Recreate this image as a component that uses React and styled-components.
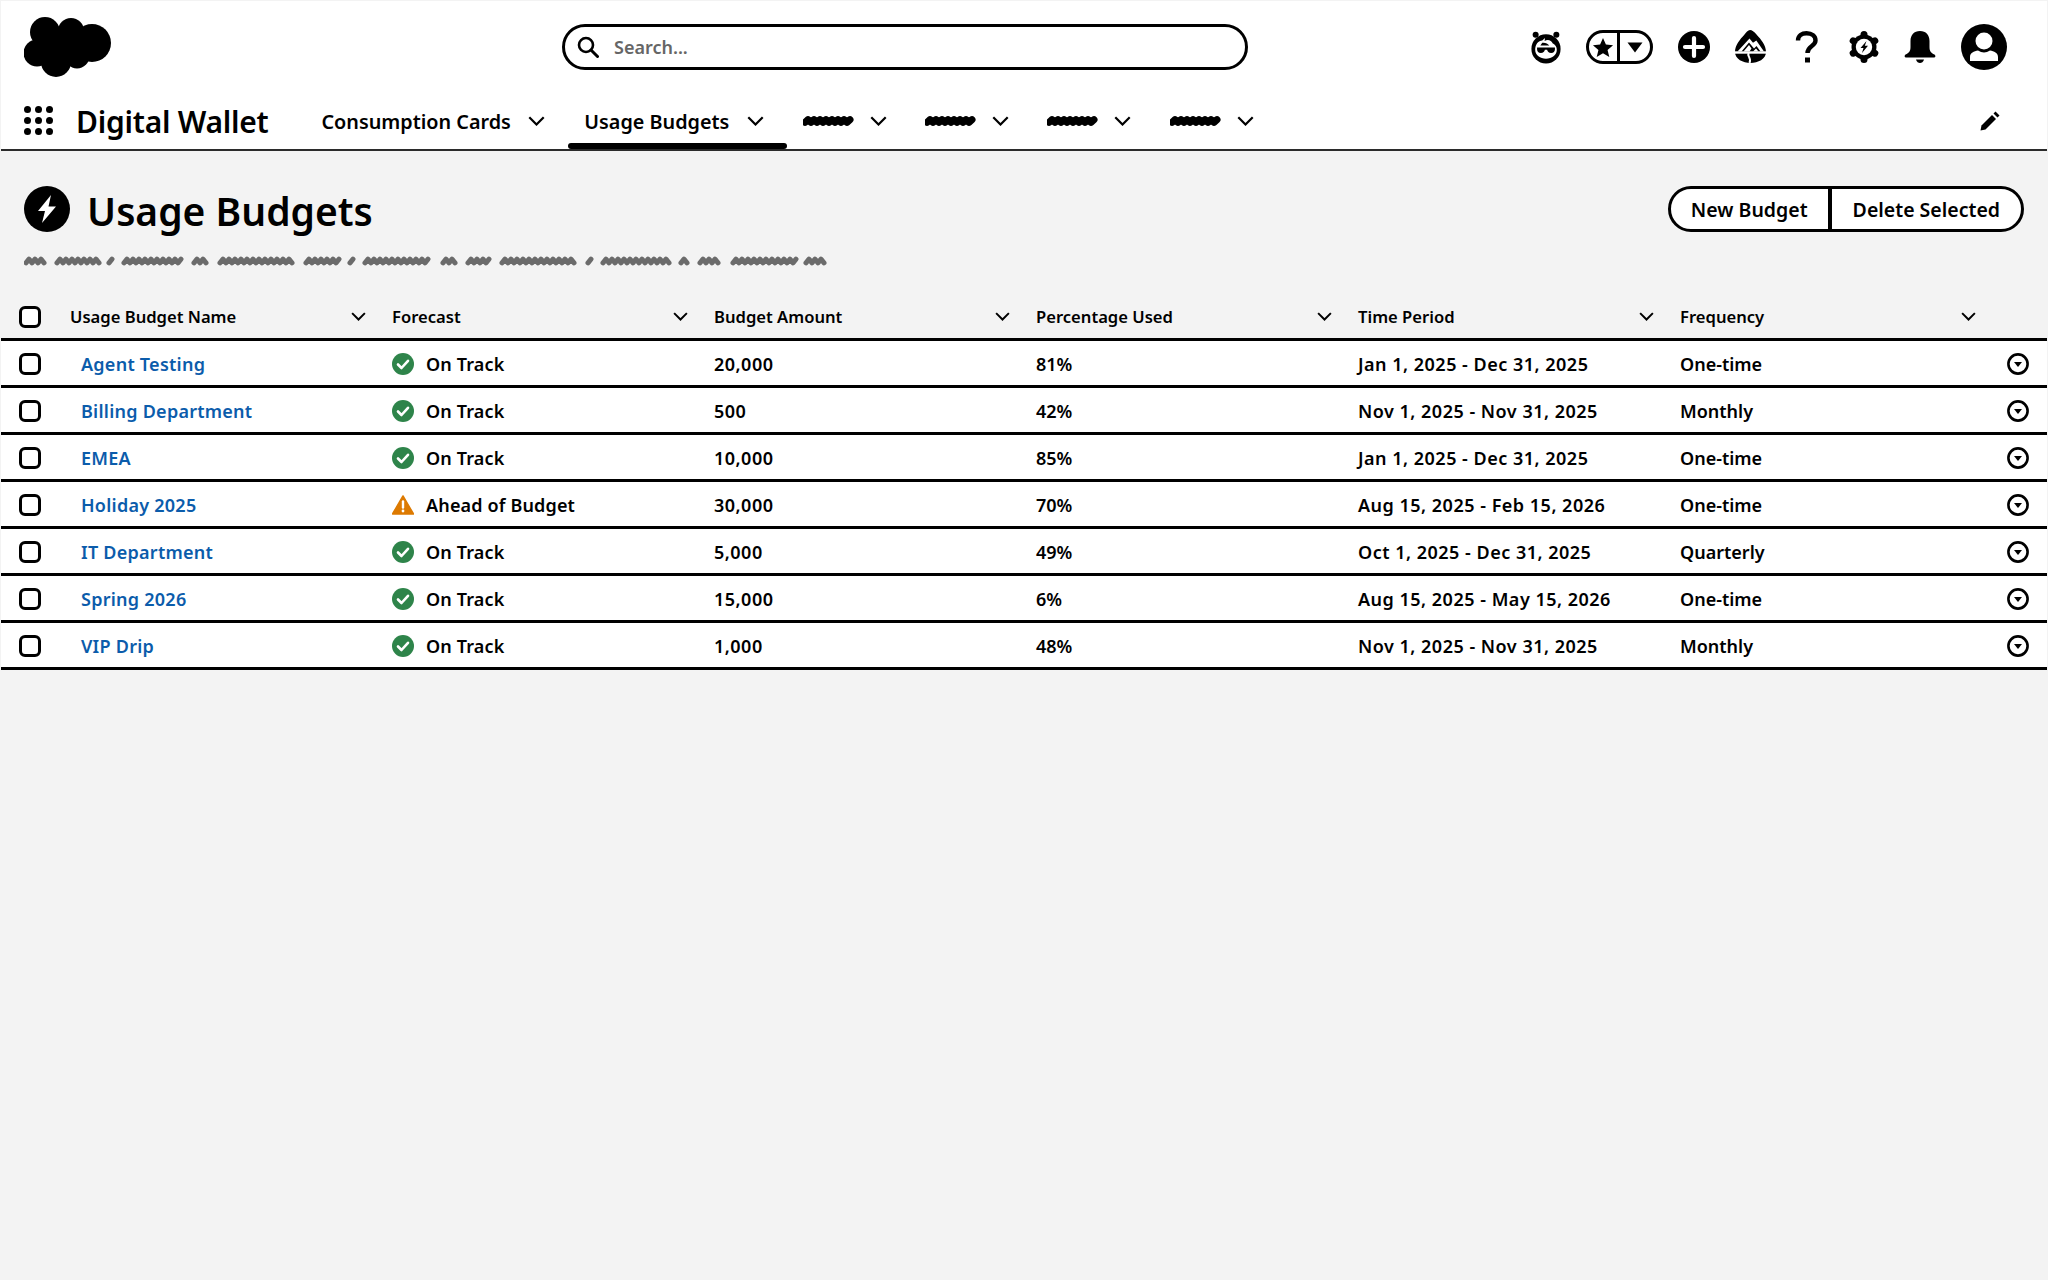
import React from 'react'
import styled, { createGlobalStyle } from 'styled-components'

const GlobalStyle = createGlobalStyle`
html, body {
  margin: 0;
  padding: 0;
  background: #f3f3f3;
  color: #000;
  font-family: "Noto Sans", "Open Sans", sans-serif;
}
* { box-sizing: border-box; }
`

const Page = styled.div`
min-height: 1280px;
padding: 1px;
`

const Header = styled.header`
background: #fff;
border-bottom: 2px solid #2b2b2b;
height: 150px;
`

const TopBar = styled.div`
display: grid;
grid-template-columns: 561px 686px 1fr;
align-items: center;
height: 92px;
`

const LogoBox = styled.div`
padding-left: 23px;
display: flex;
`

const SearchBox = styled.div`
height: 46px;
border: 3px solid #000;
border-radius: 23px;
display: flex;
align-items: center;
gap: 15px;
padding-left: 12px;
background: #fff;
`

const SearchText = styled.span`
font-size: 18px;
font-weight: 600;
color: #666;
`

const Actions = styled.div`
display: flex;
align-items: center;
justify-content: flex-end;
gap: 24.6px;
padding-right: 40px;
`

const IconBox = styled.span`
width: 32px;
height: 32px;
display: flex;
align-items: center;
justify-content: center;
`

const Favorite = styled.div`
width: 67px;
height: 34px;
border: 3px solid #000;
border-radius: 17px;
display: grid;
grid-template-columns: 1fr 1fr;
& > span {
  display: flex;
  align-items: center;
  justify-content: center;
}
& > span:first-child {
  border-right: 3px solid #000;
}
`

const NavBar = styled.nav`
display: flex;
align-items: stretch;
height: 56px;
padding-left: 23px;
`

const Launcher = styled.div`
display: grid;
grid-template-columns: repeat(3, 7px);
grid-auto-rows: 7px;
gap: 4px;
align-self: center;
margin-right: 23px;
margin-top: -1px;
`

const Dot = styled.i`
background: #000;
border-radius: 50%;
`

const AppName = styled.div`
font-size: 30px;
font-weight: 600;
letter-spacing: -0.25px;
align-self: center;
margin-right: 37px;
white-space: nowrap;
`

const Tab = styled.div`
display: flex;
align-items: center;
gap: ${p => (p.$wide ? '17.5px' : '15px')};
padding: 0 ${p => (p.$wide ? '23px' : '22.3px')} 0 16px;
height: 56px;
font-size: 19.8px;
font-weight: 600;
position: relative;
white-space: nowrap;
&::after {
  content: "";
  display: ${p => (p.$active ? 'block' : 'none')};
  position: absolute;
  left: 0;
  right: 0;
  bottom: 0;
  height: 6px;
  background: #000;
  border-radius: 3px;
}
`

const PencilBox = styled.div`
margin-left: auto;
margin-right: 47px;
display: flex;
align-items: center;
`

const PageHead = styled.div`
display: flex;
justify-content: space-between;
align-items: center;
padding: 35px 23px 0 23px;
`

const TitleGroup = styled.div`
display: flex;
align-items: center;
gap: 17px;
`

const Title = styled.h1`
margin: 0;
padding-top: 3px;
font-size: 39px;
line-height: 43px;
font-weight: 600;
`

const ButtonGroup = styled.div`
display: flex;
height: 46px;
border: 3px solid #000;
border-radius: 23px;
background: #fff;
overflow: hidden;
`

const Button = styled.button`
border: 0;
background: transparent;
font-family: inherit;
font-size: 19.5px;
font-weight: 600;
color: #000;
padding: 0 20px;
& + & {
  border-left: 4px solid #000;
  padding: 0 21px;
}
`

const ScribbleLine = styled.div`
padding: 24px 0 0 23px;
display: flex;
`

const Table = styled.div`
margin-top: 29px;
`

const HeadRow = styled.div`
display: grid;
grid-template-columns: 69px repeat(6, 322px) 1fr;
align-items: center;
height: 46px;
border-bottom: 3px solid #000;
`

const Row = styled(HeadRow)`
height: 47px;
padding-top: 2px;
background: #fff;
`

const CheckCell = styled.div`
padding-left: 18px;
display: flex;
`

const CheckBox = styled.span`
width: 22px;
height: 22px;
border: 3px solid #000;
border-radius: 6px;
background: #fff;
`

const HeadCell = styled.div`
display: flex;
justify-content: space-between;
align-items: center;
padding-right: 26px;
font-size: 16.6px;
font-weight: 600;
`

const Cell = styled.div`
display: flex;
align-items: center;
font-size: 18px;
font-weight: 600;
white-space: nowrap;
letter-spacing: ${p => (p.$wide ? '0.5px' : '0')};
`

const NameLink = styled.a`
color: #0b5cab;
padding-left: 11px;
text-decoration: none;
letter-spacing: 0.25px;
`

const Status = styled.span`
display: flex;
align-items: center;
gap: 12px;
letter-spacing: 0.15px;
`

const RowAction = styled.div`
display: flex;
padding-left: 5px;
`

const Chevron = ({ size = 16 }) => (
  <svg width={size} height={size * 0.6} viewBox="0 0 20 12" fill="none" stroke="#000" strokeWidth="2.6">
    <path d="M1.5 1.5 L10 10 L18.5 1.5" />
  </svg>
)

const wave = (x, w, y, amp) => {
  let d = `M${x} ${y + amp}`
  for (let i = 3; i < w; i += 3) {
    d += ` L${x + i} ${y + (i % 2 ? -amp : amp)}`
  }
  return d
}

const Scribble = ({ words, width, height, color, stroke, amp }) => (
  <svg width={width} height={height} fill="none" stroke={color} strokeWidth={stroke} strokeLinecap="round" strokeLinejoin="round">
    {words.map(([x, w], i) => (
      <path key={i} d={wave(x + 2, w - 4, height / 2, amp)} />
    ))}
  </svg>
)

const Logo = () => (
  <svg width="88" height="60" viewBox="0 0 88 60" fill="#000">
    <circle cx="21" cy="15" r="15" />
    <circle cx="47" cy="14" r="13" />
    <circle cx="68" cy="26" r="19" />
    <circle cx="13" cy="36" r="13.5" />
    <circle cx="32" cy="45" r="15" />
    <circle cx="53" cy="39" r="12.5" />
    <rect x="14" y="14" width="46" height="28" />
  </svg>
)

const SearchIcon = () => (
  <svg width="22" height="22" viewBox="0 0 22 22" fill="none" stroke="#000" strokeWidth="2.6">
    <circle cx="9" cy="9" r="7" />
    <path d="M14 14 L20.5 20.5" strokeWidth="3" strokeLinecap="round" />
  </svg>
)

const Astro = () => (
  <svg width="34" height="34" viewBox="0 0 34 34">
    <circle cx="6" cy="4" r="3.2" />
    <circle cx="28" cy="4" r="3.2" />
    <circle cx="17" cy="19" r="15.5" />
    <path d="M5.5 20 C5.5 14 9 10 13 10 L16 7.5 L15.5 10.5 C19 8.5 23 10 24 13 C27 14.5 28.5 17 28.5 20 C28.5 26 23 29.5 17 29.5 C11 29.5 5.5 26 5.5 20 Z" fill="#fff" />
    <path d="M7.5 17.5 H26.5 V19.5 C26.5 22 25 23.5 22.5 23.5 C20 23.5 18.5 22 18.2 20 H15.8 C15.5 22 14 23.5 11.5 23.5 C9 23.5 7.5 22 7.5 19.5 Z" />
    <path d="M13 12.5 C16 12 19 13.5 20.5 15.5 H11 Z" />
  </svg>
)

const Star = () => (
  <svg width="22" height="21" viewBox="0 0 24 23">
    <path d="M12 1 L15.2 8.3 L23 9 L17 14.2 L18.9 22 L12 17.8 L5.1 22 L7 14.2 L1 9 L8.8 8.3 Z" />
  </svg>
)

const CaretDown = () => (
  <svg width="16" height="11" viewBox="0 0 16 11">
    <path d="M0.5 0.5 H15.5 L8 10.5 Z" />
  </svg>
)

const PlusIcon = () => (
  <svg width="32" height="32" viewBox="0 0 32 32">
    <circle cx="16" cy="16" r="16" />
    <path d="M16 7 V25 M7 16 H25" stroke="#fff" strokeWidth="4.2" strokeLinecap="round" />
  </svg>
)

const Trailhead = () => (
  <svg width="32" height="34" viewBox="0 0 32 34">
    <path d="M15 0 C17 0 19 1.5 21.5 4.5 C26 9.5 31 15 31 22 C31 29 23 33 15.5 33 C8 33 0 29 0 22 C0 15 5 9.5 9.5 4.5 C11 2.5 13 0 15 0 Z" />
    <path d="M2.5 21.5 L14.5 8.5 L18 12.8 L21.3 10.5 L29 21.5 H25.5 L21.5 16 L19 18.5 L14 12.5 L6.5 21.5 Z" fill="#fff" />
    <path d="M8.5 21.5 L14 15 L16.5 18.5 L14.5 21.5 Z M18 21.5 L21 18.5 L23.5 21.5 Z" fill="#fff" />
    <path d="M0 22.5 H31" stroke="#fff" strokeWidth="2.4" />
    <path d="M14 23 C11 25.5 17 27.5 14.5 33" stroke="#fff" strokeWidth="2" fill="none" />
  </svg>
)

const HelpIcon = () => (
  <svg width="24" height="32" viewBox="0 0 24 32" fill="none" stroke="#000" strokeWidth="4.4">
    <path d="M3 9.5 C3 4.5 7 2.2 11.5 2.2 C17 2.2 20.5 5.2 20.5 9.5 C20.5 15.5 12.5 14.5 12.5 22" />
    <path d="M12.5 26.5 V31.5" strokeWidth="5" />
  </svg>
)

const GearIcon = () => (
  <svg width="32" height="32" viewBox="0 0 32 32">
    <g stroke="#000" strokeWidth="7" strokeLinecap="round">
      <path d="M16 3.5 V28.5" />
      <path d="M5.2 9.8 L26.8 22.2" />
      <path d="M5.2 22.2 L26.8 9.8" />
    </g>
    <circle cx="16" cy="16" r="12.5" />
    <circle cx="16" cy="16" r="8.2" fill="#fff" />
    <path d="M18.5 10 L12.5 17 H15.5 L14 22 L20 14.8 H16.8 Z" />
  </svg>
)

const BellIcon = () => (
  <svg width="32" height="32" viewBox="0 0 32 32">
    <path d="M16 0 C22 0 25.5 4 25.5 10 V16 C25.5 20 27 22 30.5 23.5 C32 24.5 31.5 26.5 30 26.5 H2 C0.5 26.5 0 24.5 1.5 23.5 C5 22 6.5 20 6.5 16 V10 C6.5 4 10 0 16 0 Z" />
    <path d="M12 28.5 H20 C19.5 31 17.5 32 16 32 C14.5 32 12.5 31 12 28.5 Z" />
  </svg>
)

const Avatar = () => (
  <svg width="46" height="46" viewBox="0 0 46 46">
    <circle cx="23" cy="23" r="23" />
    <circle cx="23" cy="17" r="8.5" fill="#fff" />
    <path d="M9 37 V33 C9 29 13 27 17 26.5 C21 29 25 29 29 26.5 C33 27 37 29 37 33 V37 Z" fill="#fff" />
  </svg>
)

const PencilIcon = () => (
  <svg width="20" height="20" viewBox="0 0 20 20">
    <path d="M0.5 19.5 L1.5 14.5 L12 4 L16 8 L5.5 18.5 Z" />
    <path d="M13.5 2.5 L15.5 0.5 L19.5 4.5 L17.5 6.5 Z" />
  </svg>
)

const BoltBadge = () => (
  <svg width="46" height="46" viewBox="0 0 46 46">
    <circle cx="23" cy="23" r="23" />
    <path d="M27 9 L14 25 H21 L18 37 L32 20.5 H24.5 Z" fill="#fff" />
  </svg>
)

const CheckIcon = () => (
  <svg width="22" height="22" viewBox="0 0 22 22">
    <circle cx="11" cy="11" r="11" fill="#2e844a" />
    <path d="M6 11.5 L9.5 15 L16 7.8" fill="none" stroke="#fff" strokeWidth="2.6" strokeLinecap="round" strokeLinejoin="round" />
  </svg>
)

const WarningIcon = () => (
  <svg width="22" height="20" viewBox="0 0 22 20">
    <path d="M11 1 L21.5 19 H0.5 Z" fill="#dd7a01" stroke="#dd7a01" strokeWidth="1.5" strokeLinejoin="round" />
    <path d="M11 6.5 V12.5" stroke="#fff" strokeWidth="2.4" strokeLinecap="round" />
    <circle cx="11" cy="16" r="1.4" fill="#fff" />
  </svg>
)

const RowMenu = () => (
  <svg width="22" height="22" viewBox="0 0 22 22">
    <circle cx="11" cy="11" r="9.6" fill="none" stroke="#000" strokeWidth="2.6" />
    <path d="M7 9 H15 L11 14 Z" />
  </svg>
)

const subtitleWords = [
  [0, 24], [31, 48], [83, 9], [98, 63], [168, 18], [194, 78], [280, 38], [324, 8],
  [339, 70], [417, 18], [442, 26], [476, 77], [562, 9], [577, 72], [655, 12], [674, 25],
  [707, 70], [780, 25],
]

const tabWord = [[0, 52]]

const columns = ['Usage Budget Name', 'Forecast', 'Budget Amount', 'Percentage Used', 'Time Period', 'Frequency']

const budgets = [
  { name: 'Agent Testing', forecast: 'On Track', amount: '20,000', used: '81%', period: 'Jan 1, 2025 - Dec 31, 2025', frequency: 'One-time' },
  { name: 'Billing Department', forecast: 'On Track', amount: '500', used: '42%', period: 'Nov 1, 2025 - Nov 31, 2025', frequency: 'Monthly' },
  { name: 'EMEA', forecast: 'On Track', amount: '10,000', used: '85%', period: 'Jan 1, 2025 - Dec 31, 2025', frequency: 'One-time' },
  { name: 'Holiday 2025', forecast: 'Ahead of Budget', amount: '30,000', used: '70%', period: 'Aug 15, 2025 - Feb 15, 2026', frequency: 'One-time' },
  { name: 'IT Department', forecast: 'On Track', amount: '5,000', used: '49%', period: 'Oct 1, 2025 - Dec 31, 2025', frequency: 'Quarterly' },
  { name: 'Spring 2026', forecast: 'On Track', amount: '15,000', used: '6%', period: 'Aug 15, 2025 - May 15, 2026', frequency: 'One-time' },
  { name: 'VIP Drip', forecast: 'On Track', amount: '1,000', used: '48%', period: 'Nov 1, 2025 - Nov 31, 2025', frequency: 'Monthly' },
]

export default function App() {
  return (
    <Page>
      <GlobalStyle />
      <Header>
        <TopBar>
          <LogoBox><Logo /></LogoBox>
          <SearchBox>
            <SearchIcon />
            <SearchText>Search...</SearchText>
          </SearchBox>
          <Actions>
            <IconBox><Astro /></IconBox>
            <Favorite>
              <span><Star /></span>
              <span><CaretDown /></span>
            </Favorite>
            <IconBox><PlusIcon /></IconBox>
            <IconBox><Trailhead /></IconBox>
            <IconBox><HelpIcon /></IconBox>
            <IconBox><GearIcon /></IconBox>
            <IconBox><BellIcon /></IconBox>
            <Avatar />
          </Actions>
        </TopBar>
        <NavBar>
          <Launcher>
            {Array.from({ length: 9 }).map((_, i) => <Dot key={i} />)}
          </Launcher>
          <AppName>Digital Wallet</AppName>
          <Tab $wide>Consumption Cards <Chevron size={17} /></Tab>
          <Tab $wide $active>Usage Budgets <Chevron size={17} /></Tab>
          {[0, 1, 2, 3].map(i => (
            <Tab key={i}>
              <Scribble words={tabWord} width={52} height={12} color="#000" stroke={7} amp={1.4} />
              <Chevron size={17} />
            </Tab>
          ))}
          <PencilBox><PencilIcon /></PencilBox>
        </NavBar>
      </Header>

      <PageHead>
        <TitleGroup>
          <BoltBadge />
          <Title>Usage Budgets</Title>
        </TitleGroup>
        <ButtonGroup>
          <Button>New Budget</Button>
          <Button>Delete Selected</Button>
        </ButtonGroup>
      </PageHead>
      <ScribbleLine>
        <Scribble words={subtitleWords} width={810} height={10} color="#6b6b6b" stroke={5} amp={1.8} />
      </ScribbleLine>

      <Table>
        <HeadRow>
          <CheckCell><CheckBox /></CheckCell>
          {columns.map(c => (
            <HeadCell key={c}>{c}<Chevron size={15} /></HeadCell>
          ))}
        </HeadRow>
        {budgets.map(b => (
          <Row key={b.name}>
            <CheckCell><CheckBox /></CheckCell>
            <Cell><NameLink>{b.name}</NameLink></Cell>
            <Cell>
              <Status>
                {b.forecast === 'On Track' ? <CheckIcon /> : <WarningIcon />}
                {b.forecast}
              </Status>
            </Cell>
            <Cell $wide>{b.amount}</Cell>
            <Cell>{b.used}</Cell>
            <Cell $wide>{b.period}</Cell>
            <Cell>{b.frequency}</Cell>
            <RowAction><RowMenu /></RowAction>
          </Row>
        ))}
      </Table>
    </Page>
  )
}
